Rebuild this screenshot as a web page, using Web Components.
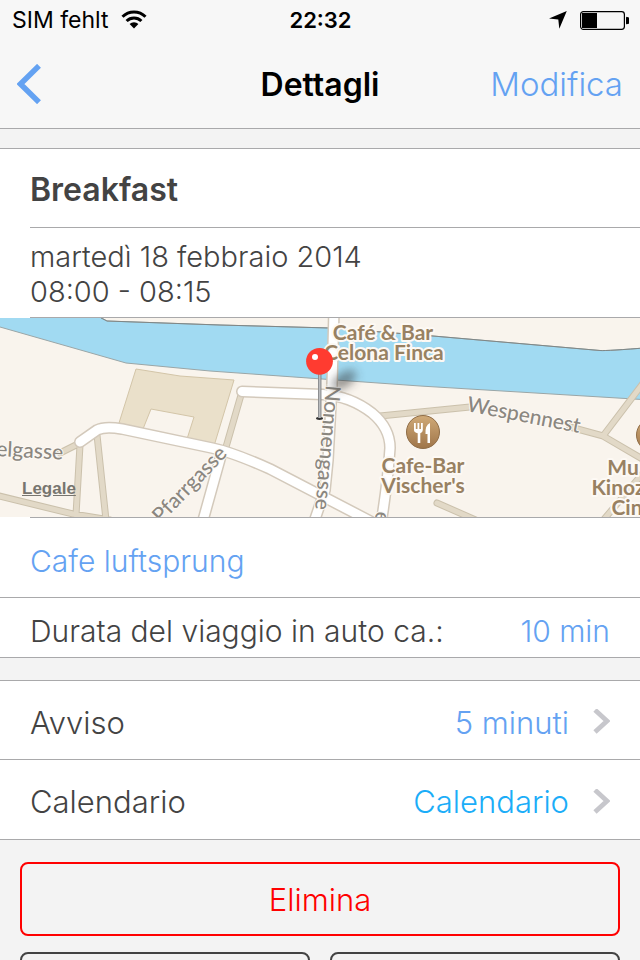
<!DOCTYPE html>
<html lang="it">
<head>
<meta charset="utf-8">
<meta name="viewport" content="width=device-width, initial-scale=1">
<title>Dettagli</title>
<style>
body {
  margin: 0;
  background: #f3f3f3;
  color: #434343;
  font-family: Inter, "Liberation Sans", sans-serif;
  font-weight: 300;
  --line: #a9a9ab;
  --accent: #64a2f2;
}
</style>
</head>
<body>
<status-bar carrier="SIM fehlt" time="22:32"></status-bar>
<nav-bar>
  <span slot="title">Dettagli</span>
  <span slot="action">Modifica</span>
</nav-bar>

<main>
  <detail-group>
    <detail-heading>Breakfast</detail-heading>
    <detail-time>
      <span>martedì 18 febbraio 2014</span>
      <span slot="hours">08:00 - 08:15</span>
    </detail-time>
    <event-map></event-map>
    <place-link>Cafe luftsprung</place-link>
    <travel-time>
      Durata del viaggio in auto ca.:
      <span slot="value">10 min</span>
    </travel-time>
  </detail-group>

  <detail-group>
    <option-row>Avviso <span slot="value">5 minuti</span></option-row>
    <option-row style="--accent: #1badf8">Calendario <span slot="value">Calendario</span></option-row>
  </detail-group>

  <event-actions></event-actions>
</main>

<script>
function define(name, html) {
  const template = document.createElement('template');
  template.innerHTML = html;

  window.customElements.define(name, class extends HTMLElement {
    constructor() {
      super();
      this.attachShadow({ mode: 'open' });
      this.shadowRoot.appendChild(template.content.cloneNode(true));
    }

    connectedCallback() {
      this.shadowRoot.querySelectorAll('[data-attr]').forEach((el) => {
        el.textContent = this.getAttribute(el.dataset.attr);
      });
    }
  });
}

define('status-bar', `
<style>
:host {
  display: grid;
  grid-template-columns: 1fr auto 1fr;
  align-items: center;
  height: 40px;
  padding: 0 11px 0 12px;
  background: #f7f7f7;
  color: #000;
  font-size: 23px;
  font-weight: 400;
}
div {
  display: flex;
  align-items: center;
  gap: 13px;
}
.right {
  justify-content: flex-end;
}
b {
  font-size: 22px;
  font-weight: 600;
}
svg {
  display: block;
}
</style>
<div>
  <span data-attr="carrier"></span>
  <svg width="26" height="20" viewBox="0 0 26 20">
    <g fill="none" stroke="#000" stroke-width="3">
      <path d="M1.5 6.8a16.3 16.3 0 0 1 23 0"/>
      <path d="M5.6 11a10.5 10.5 0 0 1 14.8 0"/>
    </g>
    <path d="M8.6 14a6.2 6.2 0 0 1 8.8 0L13 18.5z"/>
  </svg>
</div>
<b data-attr="time"></b>
<div class="right">
  <svg width="18" height="18" viewBox="0 0 18 18"><path d="M17.8 0 10.3 17.8 9.3 8.5 0 7.6z"/></svg>
  <svg width="49" height="20" viewBox="0 0 49 20">
    <rect x=".6" y="1.6" width="43.8" height="17.8" rx="2.8" fill="none" stroke="#000" stroke-width="1.2"/>
    <rect x="2" y="3" width="15" height="15"/>
    <path d="M46.500 7.300a3.300 3.300 0 0 1 0 6.600z" stroke="#000"/>
  </svg>
</div>
`);

define('nav-bar', `
<style>
:host {
  display: grid;
  grid-template-columns: 1fr auto 1fr;
  align-items: center;
  height: 88px;
  padding: 0 17px;
  background: #f7f7f7;
  border-bottom: 1px solid var(--line);
}
button {
  padding: 0;
  border: 0;
  background: none;
  color: var(--accent);
  font: inherit;
  font-size: 33px;
}
.back {
  justify-self: start;
}
.action {
  justify-self: end;
}
svg {
  display: block;
}
h1 {
  margin: 0;
  color: #000;
  font-size: 32px;
  font-weight: 600;
}
</style>
<button class="back" aria-label="Indietro">
  <svg width="24" height="40" viewBox="0 0 24 40"><path d="M22 1.8 3.5 20 22 38.2" fill="none" stroke="currentColor" stroke-width="5.5"/></svg>
</button>
<h1><slot name="title"></slot></h1>
<button class="action"><slot name="action"></slot></button>
`);

define('detail-group', `
<style>
:host {
  display: block;
  margin-top: 19px;
  background: #fff;
  border: solid var(--line);
  border-width: 1px 0;
}
:host(:nth-of-type(2)) {
  margin-top: 22px;
}
</style>
<slot></slot>
`);

define('detail-heading', `
<style>
:host {
  display: flex;
  align-items: center;
  box-sizing: border-box;
  height: 79px;
  margin-left: 30px;
  padding-top: 2px;
  border-bottom: 1px solid var(--line);
}
h2 {
  margin: 0;
  font-size: 32px;
  font-weight: 600;
}
</style>
<h2><slot></slot></h2>
`);

define('detail-time', `
<style>
:host {
  display: flex;
  flex-direction: column;
  justify-content: center;
  box-sizing: border-box;
  height: 90px;
  margin-left: 30px;
  padding-top: 2px;
  border-bottom: 1px solid var(--line);
  font-size: 29px;
  line-height: 35px;
}
</style>
<div><slot></slot></div>
<div><slot name="hours"></slot></div>
`);

define('event-map', `
<style>
:host {
  display: block;
  position: relative;
  height: 199px;
}
:host::after {
  content: "";
  display: block;
  margin-left: 30px;
  border-bottom: 1px solid var(--line);
}
svg {
  display: block;
  width: 100%;
  height: 100%;
  background: #f9f4ed;
}
a {
  position: absolute;
  left: 22px;
  bottom: 18px;
  color: #77756f;
  font: bold 17px/20px "Liberation Sans", sans-serif;
}
.case { stroke: #d3c9bb; stroke-width: 12; }
.road { stroke: #fff; stroke-width: 9; }
.lane-case { stroke: #cbc1ac; stroke-width: 7; }
.lane { stroke: #e2d9c7; stroke-width: 5; }
text {
  font-family: Lato, sans-serif;
  paint-order: stroke;
  stroke: #fdf9f4;
  stroke-width: 4px;
  stroke-linejoin: round;
}
.poi {
  fill: #988162;
  font-size: 21px;
  font-weight: 700;
  text-anchor: middle;
}
.street {
  fill: #8b8780;
  stroke-width: 2px;
  font-size: 21px;
  font-weight: 500;
}
</style>
<svg viewBox="0 318 640 199" preserveAspectRatio="xMidYMid slice" role="img" aria-label="Mappa">
  <defs>
    <linearGradient id="disc" x1="0" y1="0" x2="0" y2="1">
      <stop offset="0" stop-color="#d0aa78"/>
      <stop offset="1" stop-color="#9f7549"/>
    </linearGradient>
    <linearGradient id="needle">
      <stop offset="0" stop-color="#77797b"/>
      <stop offset=".5" stop-color="#c3c5c8"/>
      <stop offset="1" stop-color="#77797b"/>
    </linearGradient>
    <filter id="blur" x="-1" y="-1" width="3" height="3"><feGaussianBlur stdDeviation="5"/></filter>
    <g id="roads">
      <path d="M334 310 332 385 328 460 325 490 314 522"/>
      <path d="M222 452 202 524"/>
      <path d="M242 391.500 323 394.500Q350 396 372 413 390 428 390 448 388 480 381 524"/>
      <path d="M80 442 97 430Q105 426 122 429L212 448Q232 452 270 469L372 522"/>
    </g>
    <g id="lanes">
      <path d="M80 445 76 515M97 435 106 520M-5 495 73 514 110 520M60 453 80 443"/>
      <path d="M241 395 226 447M380 416 420 412 470 407M570 427 603 436 644 382M603 436 644 460M600 524 644 472M437 503 478 521"/>
    </g>
  </defs>

  <!-- river -->
  <path d="M-10 310H88L107 321 220 325 330 328 433 336 600 350.500Q607 351 650 347.500V400L420 386 210 371 126 363 0 327-10 324z" fill="#a1daf2" stroke="#9aa6a7"/>
  <path d="M101 318 107 321 220 325 330 328 433 336 600 350.500Q607 351 650 347.500" fill="none" stroke="#7f8787"/>
  <!-- building -->
  <path d="M136 369 180 376 234 380 214 446 187 439 194 417 151 409 143 429 119 423z" fill="#eae0ca" stroke="#d3c5a8"/>

  <g fill="none" stroke-linecap="round">
    <use href="#lanes" class="lane-case"/>
    <use href="#lanes" class="lane"/>
    <use href="#roads" class="case"/>
    <use href="#roads" class="road"/>
  </g>

  <text class="street" transform="translate(-4 456) rotate(3)">elgasse</text>
  <text class="street" transform="translate(161 524) rotate(-46)">Pfarrgasse</text>
  <text class="street" transform="translate(326 385) rotate(95)">Nonnengasse</text>
  <text class="street" transform="translate(466 411) rotate(11)">Wespennest</text>
  <text class="street" transform="translate(376 511) rotate(97)">e</text>

  <text class="poi" x="383" y="340">Café &amp; Bar</text>
  <text class="poi" x="384" y="360">Celona Finca</text>
  <text class="poi" x="423" y="473">Cafe-Bar</text>
  <text class="poi" x="423" y="493">Vischer's</text>
  <text class="poi" x="623" y="475">Mu</text>
  <text class="poi" x="618" y="495">Kinoz</text>
  <text class="poi" x="627" y="515">Cin</text>

  <g fill="url(#disc)" stroke="#8f6d47">
    <circle cx="423" cy="432" r="16.5"/>
    <circle cx="653" cy="435" r="16.5"/>
  </g>
  <g fill="#fff">
    <path d="M414 423h1.800v6h1.700v-6h1.800v6h1.700v-6h1.800v7q0 2.500-2.500 3.200V443h-2.600V433.200Q414 432.500 414 430z"/>
    <path d="M430 423V443h-2.500V434H425.500Q425 425 430 423z"/>
  </g>

  <!-- pin -->
  <ellipse cx="344" cy="380" rx="14" ry="7" transform="rotate(-35 344 380)" fill="#333" opacity=".5" filter="url(#blur)"/>
  <ellipse cx="319.500" cy="418.500" rx="3.500" ry="1.400" fill="#333"/>
  <rect x="318" y="373" width="3.400" height="45" fill="url(#needle)"/>
  <circle cx="319.500" cy="361.300" r="13.400" fill="#ff3b30"/>
  <circle cx="315" cy="357" r="3" fill="#fff"/>
</svg>
<a href="#legale">Legale</a>
`);

define('place-link', `
<style>
:host {
  display: flex;
  align-items: center;
  height: 80px;
  padding: 6px 30px 0;
  box-sizing: border-box;
  margin-top: 1px;
  border-bottom: 1px solid var(--line);
  font-size: 30px;
}
a {
  color: var(--accent);
  text-decoration: none;
}
</style>
<a href="#mappa"><slot></slot></a>
`);

define('travel-time', `
<style>
:host {
  display: flex;
  align-items: center;
  justify-content: space-between;
  height: 59px;
  padding: 6px 30px 0;
  box-sizing: border-box;
  font-size: 30px;
}
.value {
  color: var(--accent);
}
</style>
<div><slot></slot></div>
<div class="value"><slot name="value"></slot></div>
`);

define('option-row', `
<style>
:host {
  display: block;
}
:host(:not(:first-of-type)) {
  border-top: 1px solid var(--line);
}
button {
  display: flex;
  align-items: center;
  width: 100%;
  height: 79px;
  padding: 4px 30px 0;
  border: 0;
  background: none;
  color: inherit;
  font: inherit;
  font-size: 31px;
  text-align: left;
}
:host(:first-of-type) button {
  height: 78px;
}
.value {
  margin-left: auto;
  margin-right: 24px;
  color: var(--accent);
}
</style>
<button>
  <span><slot></slot></span>
  <span class="value"><slot name="value"></slot></span>
  <svg width="17" height="26" viewBox="0 0 17 26"><path d="M2 1 14 12 2 23" fill="none" stroke="#c7c7cc" stroke-width="4.8"/></svg>
</button>
`);

define('event-actions', `
<style>
:host {
  display: grid;
  grid-template-columns: 1fr 1fr;
  gap: 16px 20px;
  padding: 22px 20px 0;
  height: 98px;
  overflow: hidden;
}
button {
  height: 74px;
  border: 2px solid #434343;
  border-radius: 8px;
  background: none;
  font: inherit;
  font-size: 31px;
}
.delete {
  grid-column: span 2;
  border-color: #f00;
  color: #f00;
}
</style>
<button class="delete">Elimina</button>
<button aria-label="Condividi"></button>
<button aria-label="Duplica"></button>
`);
</script>
</body>
</html>
